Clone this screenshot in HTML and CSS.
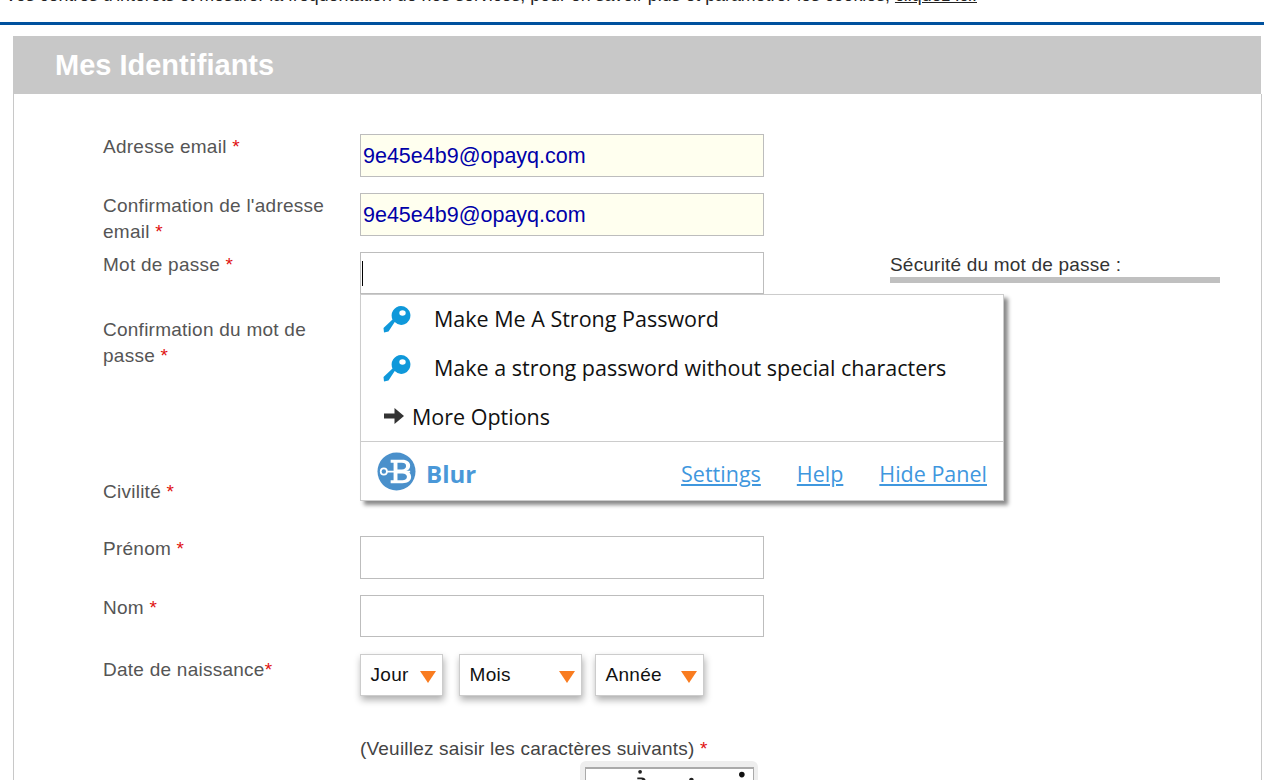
FILE: index.html
```html
<!DOCTYPE html>
<html lang="fr">
<head>
<meta charset="utf-8">
<title>Mes Identifiants</title>
<link rel="stylesheet" href="styles.css">
</head>
<body>
<div class="notice"><p class="notice-text">Vos centres d'intérêts et mesurer la fréquentation de nos services, pour en savoir plus et paramétrer les cookies, <a href="#">cliquez ici.</a></p></div>
<section class="panel">
  <h1 class="panel-title">Mes Identifiants</h1>
  <div class="panel-body">
    <div class="row">
      <div class="label">Adresse email <span class="req">*</span></div>
      <div class="field field-filled">9e45e4b9@opayq.com</div>
    </div>
    <div class="row row-fixed">
      <div class="label">Confirmation de l'adresse email <span class="req">*</span></div>
      <div class="field field-filled">9e45e4b9@opayq.com</div>
    </div>
    <div class="row row-password">
      <div class="label">Mot de passe <span class="req">*</span></div>
      <div class="control">
        <div class="field field-short"><span class="caret"></span></div>
        <div class="popup">
          <div class="popup-item">
            <svg class="key" viewBox="0 0 28 28"><path d="M18 1a9.500 9.500 0 0 1 3.500 18.300 9.500 9.500 0 0 1-9.800-2.200L5.500 26.500 1 27.500l-.5-4.500 9-8.500A9.500 9.500 0 0 1 18 1z" fill="#0f98da"/><ellipse cx="19.500" cy="8" rx="3.200" ry="2.800" fill="#fff"/></svg>
            <span>Make Me A Strong Password</span>
          </div>
          <div class="popup-item">
            <svg class="key" viewBox="0 0 28 28"><path d="M18 1a9.500 9.500 0 0 1 3.500 18.300 9.500 9.500 0 0 1-9.800-2.200L5.500 26.500 1 27.500l-.5-4.500 9-8.500A9.500 9.500 0 0 1 18 1z" fill="#0f98da"/><ellipse cx="19.500" cy="8" rx="3.200" ry="2.800" fill="#fff"/></svg>
            <span>Make a strong password without special characters</span>
          </div>
          <div class="popup-more">
            <svg class="arrow" viewBox="0 0 20 18"><path d="M0 6.500h10.500V1L20 9l-9.500 8v-5.500H0z" fill="#333"/></svg>
            <span>More Options</span>
          </div>
          <div class="popup-foot">
            <svg class="logo" viewBox="0 0 40 40">
              <circle cx="20" cy="20" r="19.500" fill="#4a90cb"/>
              <path d="M14 8h12c5 0 8 2.500 8 6 0 2.700-1.600 4.600-4 5.400 3 .7 5 2.900 5 6 0 4.200-3.300 6.600-9 6.600H14v-3h3V11h-3zM21 11v7h4.500c2.700 0 4.300-1.300 4.300-3.600S28.200 11 25.500 11zM21 22v7h5c3 0 4.700-1.300 4.700-3.500S29 22 26 22z" fill="#fff"/>
              <circle cx="7" cy="20" r="3.200" fill="none" stroke="#fff" stroke-width="1.800"/>
              <path d="M10 19.200h24v1.800H10zM30 21h1.500v2H30z" fill="#fff"/>
            </svg>
            <strong class="brand">Blur</strong>
            <nav class="foot-links">
              <a href="#">Settings</a>
              <a href="#">Help</a>
              <a href="#">Hide Panel</a>
            </nav>
          </div>
        </div>
      </div>
      <div class="strength">
        <div class="strength-label">Sécurité du mot de passe :</div>
        <div class="strength-bar"></div>
      </div>
    </div>
    <div class="row row-confirm">
      <div class="label">Confirmation du mot de passe <span class="req">*</span></div>
      <div class="field"></div>
    </div>
    <div class="row row-civility">
      <div class="label">Civilité <span class="req">*</span></div>
    </div>
    <div class="row">
      <div class="label">Prénom <span class="req">*</span></div>
      <div class="field"></div>
    </div>
    <div class="row row-name">
      <div class="label">Nom <span class="req">*</span></div>
      <div class="field field-short"></div>
    </div>
    <div class="row row-date">
      <div class="label">Date de naissance<span class="req">*</span></div>
      <div class="selects">
        <div class="select select-day">Jour<i class="tri"></i></div>
        <div class="select select-month">Mois<i class="tri"></i></div>
        <div class="select select-year">Année<i class="tri"></i></div>
      </div>
    </div>
    <div class="captcha-block">
      <div class="captcha-label">(Veuillez saisir les caractères suivants) <span class="req">*</span></div>
      <div class="captcha">
        <svg class="captcha-img" viewBox="0 0 169 30">
          <circle cx="53" cy="3" r="2" fill="#222"/>
          <circle cx="162" cy="6" r="3" fill="#111"/>
          <circle cx="108" cy="12" r="2.500" fill="#222"/>
          <path d="M50 9h5c3 0 4 2 4 4h-3c0-1-1-2-2-2h-4z" fill="#222"/>
        </svg>
      </div>
    </div>
  </div>
</section>
</body>
</html>
```
FILE: styles.css
```css
* { box-sizing: border-box; }
html, body { margin: 0; height: 780px; overflow: hidden; background: #fff; }
body { font-family: "Liberation Sans", Arial, sans-serif; color: #555; }

.notice { height: 25px; border-bottom: 3px solid #00519e; overflow: hidden; padding-left: 5px; }
.notice-text { margin: -14px 0 0; font-size: 17.8px; line-height: 18px; color: #222; white-space: nowrap; }
.notice-text a { color: #222; }

.panel { margin: 11px 3px 0 13px; }
.panel-title { margin: 0; height: 58px; padding-left: 42px; background: #c8c8c8; color: #fff; font-size: 29px; line-height: 59px; font-weight: 700; }
.panel-body { border-left: 1px solid #c8c8c8; border-right: 1px solid #c8c8c8; margin-right: -1px; padding: 40px 0 40px 89px; height: 760px; }

.row { display: flex; align-items: flex-start; margin-bottom: 16px; }
.row-fixed { height: 43px; }
.label { width: 257px; flex: none; padding-right: 20px; font-size: 19px; letter-spacing: .25px; line-height: 26px; color: #555; }
.req { color: #e01010; }

.field { width: 404px; height: 43px; flex: none; border: 1px solid #bdbdbd; background: #fff; padding-left: 2px; font-size: 21.5px; line-height: 43px; color: #0000a8; }
.field-filled { background: #ffffef; }
.field-short { height: 42px; }
.control { position: relative; width: 404px; flex: none; }
.caret { display: inline-block; width: 1px; height: 25px; background: #000; margin: 8px 0 0 -1px; vertical-align: top; }

.row-confirm { margin-bottom: 110px; }
.row-confirm .label { margin-top: 7px; }
.row-civility { height: 41px; }
.row-name { margin-bottom: 17px; }
.row-date .label { margin-top: 3px; }

.strength { margin-left: 126px; width: 330px; }
.strength-label { font-size: 19px; letter-spacing: .2px; line-height: 25px; color: #333; }
.strength-bar { height: 6px; background: #c0c0c0; }

.popup { position: absolute; left: 0; top: 42px; width: 644px; height: 207px; background: #fff; border: 1px solid #ccc; box-shadow: 4px 4px 4px #8a8a8a; z-index: 5; font-family: "Open Sans", sans-serif; color: #111; font-size: 21.5px; }
.popup-item { display: flex; align-items: center; height: 49px; padding: 0 0 2px 22px; }
.key { width: 28px; height: 28px; margin-right: 23px; flex: none; }
.popup-more { display: flex; align-items: center; height: 48px; padding: 0 0 2px 23px; }
.arrow { width: 20px; height: 18px; margin-right: 8px; flex: none; }
.popup-foot { display: flex; align-items: center; height: 60px; border-top: 1px solid #ccc; padding: 3px 16px 0 16px; }
.logo { width: 39px; height: 39px; flex: none; margin-top: -3px; }
.brand { margin-left: 10px; font-size: 24px; font-weight: 700; color: #4a98d8; }
.foot-links { margin-left: auto; display: flex; gap: 36px; }
.foot-links a { color: #3f97de; }

.selects { display: flex; }
.select { position: relative; height: 42px; border: 1px solid #ccc; background: #fff; box-shadow: 1px 4px 7px rgba(0,0,0,.32); padding-left: 9.5px; font-size: 19px; letter-spacing: .3px; line-height: 40px; color: #111; }
.select-day { width: 83px; margin-right: 16px; }
.select-month { width: 123px; margin-right: 13px; }
.select-year { width: 109px; }
.tri { position: absolute; right: 6px; top: 16px; width: 0; height: 0; border-left: 8px solid transparent; border-right: 8px solid transparent; border-top: 12px solid #f97c20; }

.captcha-block { margin: 0 0 0 257px; padding-top: 24px; }
.captcha-label { font-size: 19px; letter-spacing: .2px; line-height: 26px; color: #444; }
.captcha { margin: -1px 0 0 220px; width: 178px; height: 60px; background: #eee; border-radius: 6px; padding: 6px 5px; }
.captcha-img { display: block; width: 169px; height: 30px; background: #fff; border-top: 2px solid #aaa; border-left: 1px solid #aaa; border-right: 1px solid #aaa; }
```
